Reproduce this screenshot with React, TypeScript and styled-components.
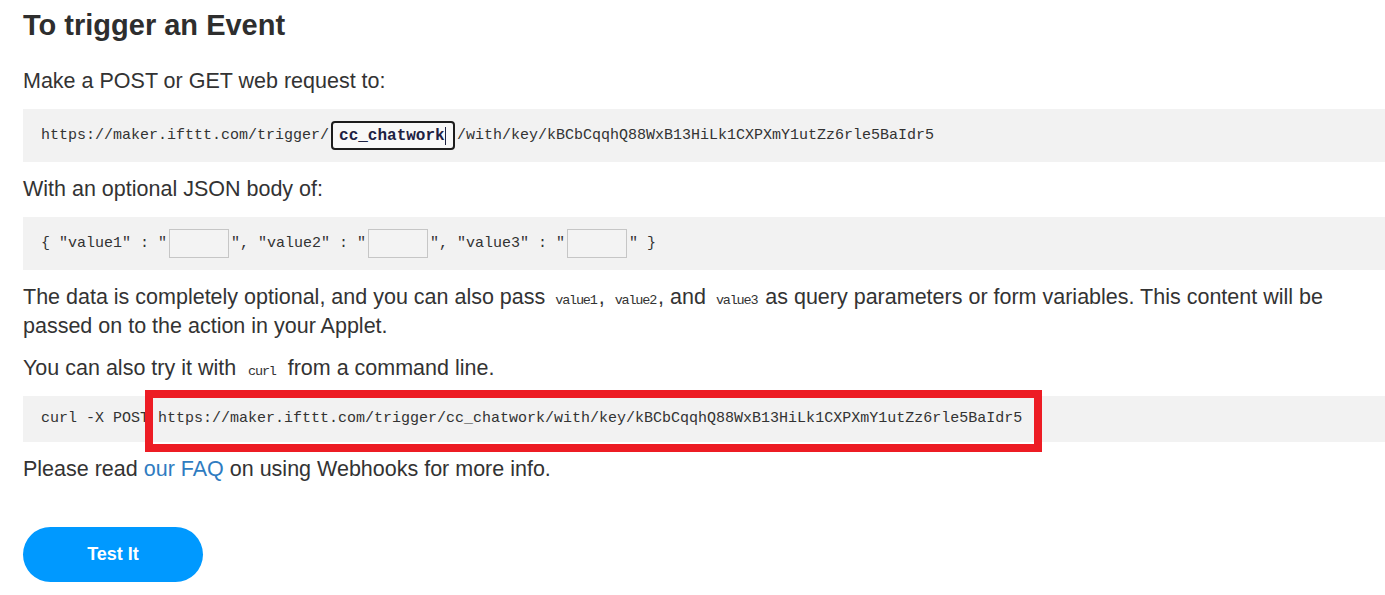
import React from "react";
import styled, { createGlobalStyle } from "styled-components";

const Global = createGlobalStyle`
  html, body { margin: 0; padding: 0; background: #ffffff; }
  body {
    font-family: "Liberation Sans", Arial, Helvetica, sans-serif;
    color: #333333;
  }
`;

const Page = styled.main`
  display: flex;
  flex-direction: column;
  align-items: stretch;
  gap: 13px;
  padding: 8px 0 20px 23px;
  box-sizing: border-box;
  width: 1385px;
`;

const Heading = styled.h2`
  margin: 0 0 12px 0;
  font-size: 29px;
  line-height: 34px;
  font-weight: 700;
  color: #2e2e2e;
`;

const Para = styled.p`
  margin: 0;
  font-size: 21.5px;
  line-height: 29px;
  color: #333333;
  padding-right: 30px;
`;

const InlineCode = styled.code<{ $l?: number; $r?: number }>`
  font-family: "Liberation Mono", "DejaVu Sans Mono", monospace;
  font-size: 13.5px;
  line-height: 1;
  letter-spacing: -1.2px;
  color: #333333;
  padding: 0 ${(p) => p.$r ?? 2}px 0 ${(p) => p.$l ?? 4}px;
`;

const Link = styled.a`
  color: #2f7cc1;
  text-decoration: none;
`;

const CodeBlock = styled.div`
  position: relative;
  display: flex;
  align-items: center;
  background: #f2f2f2;
  padding: 12px 18px;
  font-family: "Liberation Mono", "DejaVu Sans Mono", monospace;
  font-size: 15px;
  line-height: 22px;
  color: #333333;
  white-space: pre;
`;

const EventName = styled.span`
  position: relative;
  display: inline-flex;
  align-items: center;
  box-sizing: border-box;
  width: 124px;
  height: 29px;
  margin: 0 2px;
  padding: 0 6px;
  border: 2px solid #1d1d1d;
  border-radius: 4px;
  background: #f8f8f8;
  font-size: 16px;
  font-weight: 700;
  color: #1d2142;
  &::after {
    content: "";
    display: inline-block;
    width: 1px;
    height: 18px;
    background: #1d2142;
  }
`;

const ValueInput = styled.span`
  display: inline-block;
  box-sizing: border-box;
  width: 60px;
  height: 29px;
  margin: 0 2px;
  border: 1px solid #c6c6c6;
  background: #f3f3f3;
`;

const Highlight = styled.span`
  position: absolute;
  left: 122px;
  top: -6px;
  width: 897px;
  height: 62px;
  box-sizing: border-box;
  border: 8px solid #ed1c24;
  pointer-events: none;
`;

const ButtonRow = styled.div`
  margin-top: 30px;
`;

const TestButton = styled.button`
  width: 180px;
  height: 55px;
  border: none;
  border-radius: 28px;
  background: #0099ff;
  color: #ffffff;
  font-family: "Liberation Sans", Arial, sans-serif;
  font-size: 18px;
  font-weight: 700;
  cursor: pointer;
`;

const KEY = "kBCbCqqhQ88WxB13HiLk1CXPXmY1utZz6rle5BaIdr5";

export default function App() {
  return (
    <>
      <Global />
      <Page>
        <Heading>To trigger an Event</Heading>
        <Para>Make a POST or GET web request to:</Para>
        <CodeBlock>
          {"https://maker.ifttt.com/trigger/"}
          <EventName>cc_chatwork</EventName>
          {"/with/key/" + KEY}
        </CodeBlock>
        <Para>With an optional JSON body of:</Para>
        <CodeBlock>
          {'{ "value1" : "'}
          <ValueInput />
          {'", "value2" : "'}
          <ValueInput />
          {'", "value3" : "'}
          <ValueInput />
          {'" }'}
        </CodeBlock>
        <Para>
          The data is completely optional, and you can also pass <InlineCode>value1</InlineCode>,{" "}
          <InlineCode>value2</InlineCode>, and <InlineCode>value3</InlineCode> as query parameters or
          form variables. This content will be passed on to the action in your Applet.
        </Para>
        <Para>
          You can also try it with <InlineCode $l={6} $r={6}>curl</InlineCode> from a command line.
        </Para>
        <CodeBlock>
          {"curl -X POST https://maker.ifttt.com/trigger/cc_chatwork/with/key/" + KEY}
          <Highlight />
        </CodeBlock>
        <Para>
          Please read <Link href="#">our FAQ</Link> on using Webhooks for more info.
        </Para>
        <ButtonRow>
          <TestButton>Test It</TestButton>
        </ButtonRow>
      </Page>
    </>
  );
}
